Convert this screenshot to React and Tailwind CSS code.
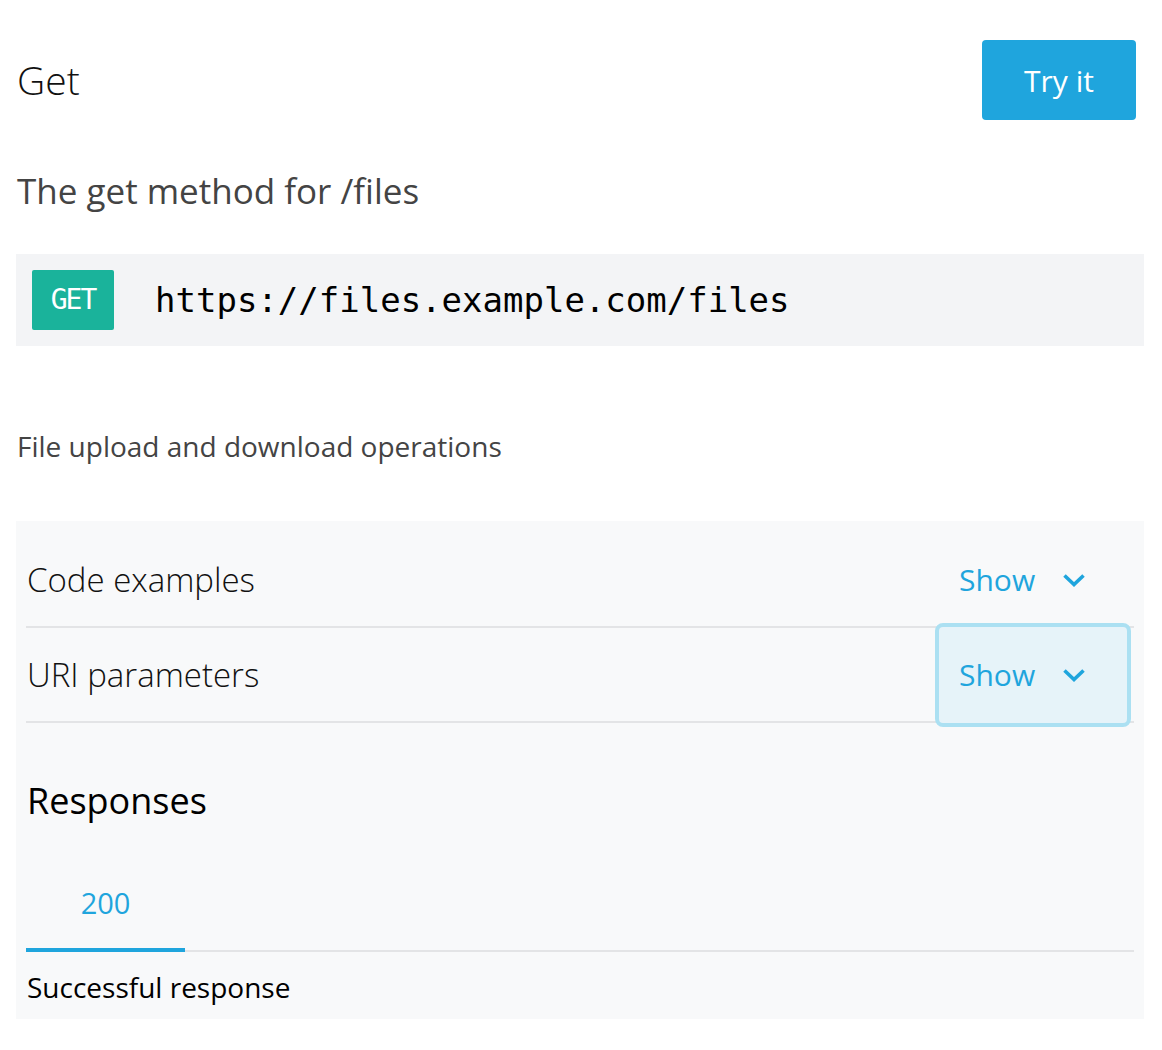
import React from "react";

function Chevron() {
  return (
    <svg width="24" height="16" viewBox="0 0 24 16" fill="none" className="ml-[27px]">
      <path d="M2.5 3.5 L12 12.5 L21.5 3.5" stroke="#1fa5dd" strokeWidth="3.6" strokeLinecap="butt" strokeLinejoin="miter" />
    </svg>
  );
}

function Row({ label, focused }) {
  return (
    <div className="flex h-[95px] items-center justify-between border-b-2 border-[#e3e4e6]">
      <span className="pl-[1px] text-[33px] font-light text-[#111]">{label}</span>
      <button
        className={
          focused
            ? "mr-[3px] flex h-[104px] w-[196px] shrink-0 items-center rounded-[8px] border-4 border-[#abe0f2] bg-[#e6f3f9] pl-[20px]"
            : "mr-[3px] flex h-[104px] w-[196px] shrink-0 items-center rounded-[8px] border-4 border-transparent pl-[20px]"
        }
      >
        <span className="text-[30px] text-[#1fa5dd]">Show</span>
        <Chevron />
      </button>
    </div>
  );
}

export default function App() {
  return (
    <div className="min-h-[1050px] bg-white pl-[16px] pr-[18px] pt-[40px] font-['Open_Sans',sans-serif]">
      <div className="flex h-[80px] items-center justify-between pr-[8px]">
        <h1 className="pl-[1px] text-[39px] font-light text-[#111]">Get</h1>
        <button className="flex h-[80px] w-[154px] items-center justify-center rounded-[4px] bg-[#1fa5dd] text-[30px] text-white">
          Try it
        </button>
      </div>

      <p className="mt-[49px] pl-[1px] text-[35px] leading-[44px] text-[#444]">The get method for /files</p>

      <div className="mt-[41px] flex h-[92px] items-center bg-[#f3f4f6] pl-[16px]">
        <span className="flex h-[60px] w-[82px] items-center justify-center rounded-[2px] bg-[#1ab39b] font-['DejaVu_Sans_Mono',monospace] text-[28px] tracking-[-2px] text-white">
          GET
        </span>
        <span className="ml-[41px] font-['DejaVu_Sans_Mono',monospace] text-[34px] tracking-[0px] text-black">
          https://files.example.com/files
        </span>
      </div>

      <p className="mt-[80px] pl-[1px] text-[28px] leading-[40px] text-[#444]">File upload and download operations</p>

      <div className="mt-[55px] bg-[#f8f9fa] px-[10px] pt-[12px] pb-[13px]">
        <Row label="Code examples" />
        <Row label="URI parameters" focused />

        <h2 className="mt-[54px] pl-[1px] text-[36px] leading-[48px] text-black">Responses</h2>

        <div className="mt-[35px] flex border-b-2 border-[#e3e4e6]">
          <div className="flex h-[92px] w-[159px] items-center justify-center border-b-4 border-[#1fa5dd] pb-[2px] -mb-[2px] text-[29px] text-[#1fa5dd]">
            200
          </div>
        </div>

        <p className="mt-[16px] pl-[1px] text-[28px] leading-[38px] text-black">Successful response</p>
      </div>
    </div>
  );
}
